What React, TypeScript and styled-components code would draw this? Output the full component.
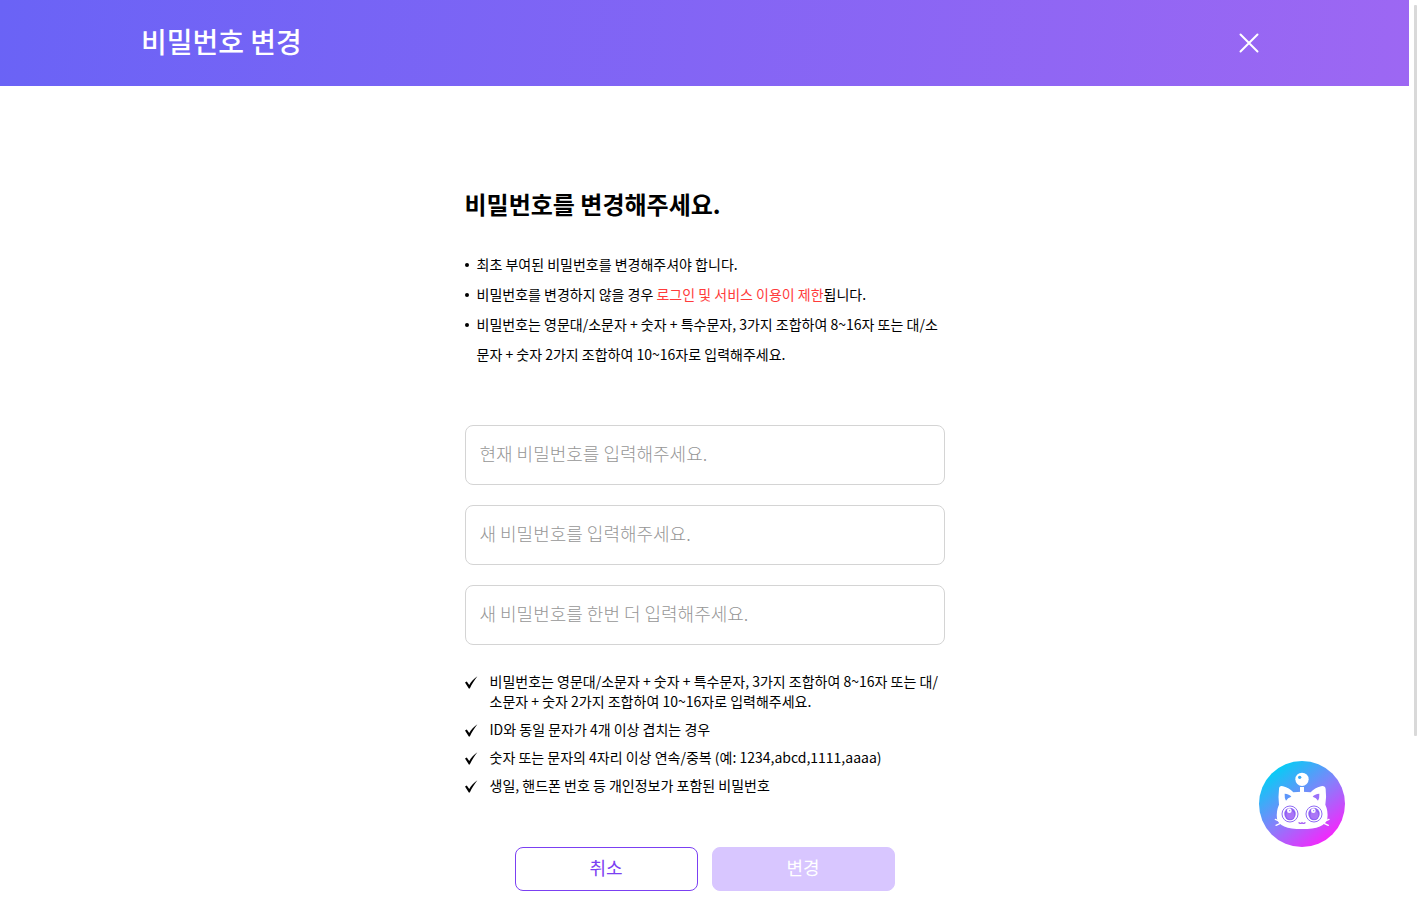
import React from "react";
import styled, { createGlobalStyle } from "styled-components";

const GlobalStyle = createGlobalStyle`
  *, *::before, *::after { box-sizing: border-box; }
  body {
    margin: 0;
    background: #fff;
    color: #000;
    font-family: "Noto Sans CJK KR", "Noto Sans", sans-serif;
  }
  button, input { font-family: inherit; }
`;

const Page = styled.div`
  padding-right: 13px;
`;

const Header = styled.header`
  height: 86px;
  background: linear-gradient(96deg, #6a63f6 0%, #9d67f3 100%);
`;

const HeaderInner = styled.div`
  width: 80%;
  height: 100%;
  margin: 0 auto;
  display: flex;
  align-items: center;
  justify-content: space-between;
`;

const Title = styled.h1`
  margin: 0;
  padding-bottom: 4px;
  font-size: 28px;
  line-height: 40px;
  font-weight: 500;
  color: #fff;
`;

const CloseButton = styled.button`
  display: grid;
  place-items: center;
  width: 38px;
  height: 38px;
  padding: 0;
  border: 0;
  background: none;
  cursor: pointer;
`;

const Main = styled.main`
  max-width: 480px;
  margin: 0 auto;
  padding: 99px 0 20px;
`;

const Heading = styled.h2`
  margin: 0 0 26px;
  font-size: 24px;
  line-height: 38px;
  font-weight: 700;
`;

const Notices = styled.ul`
  margin: 0 0 56px;
  padding: 0;
  list-style: none;
`;

const Notice = styled.li`
  display: flex;
  gap: 8px;
  font-size: 14px;
  line-height: 30px;

  &::before {
    content: "";
    flex: none;
    width: 4px;
    height: 4px;
    margin-top: 14px;
    border-radius: 50%;
    background: #000;
  }
`;

const Warning = styled.span`
  color: #ff3b3b;
`;

const Fields = styled.div`
  display: grid;
  gap: 20px;
`;

const Field = styled.input`
  width: 100%;
  height: 60px;
  padding: 0 14px 4px;
  border: 1px solid #d4d4d4;
  border-radius: 8px;
  background: #fff;
  font-size: 18px;
  font-weight: 300;
  color: #000;

  &::placeholder {
    color: #969696;
    opacity: 1;
  }
`;

const Rules = styled.ul`
  display: grid;
  gap: 8px;
  margin: 26px 0 52px;
  padding: 0;
  list-style: none;
`;

const Rule = styled.li`
  display: flex;
  gap: 12px;
  font-size: 14px;
  line-height: 20px;

  svg {
    flex: none;
    margin-top: 5px;
  }
`;

const Actions = styled.div`
  display: flex;
  justify-content: center;
  gap: 14px;
`;

const ActionButton = styled.button<{ $filled?: boolean }>`
  width: 183px;
  height: 44px;
  padding: 0 0 4px;
  border: 1px solid ${(p) => (p.$filled ? "#d8c6ff" : "#7b40f2")};
  border-radius: 8px;
  background: ${(p) => (p.$filled ? "#d8c6ff" : "#fff")};
  color: ${(p) => (p.$filled ? "#fff" : "#7b40f2")};
  font-size: 18px;
  font-weight: 400;
`;

const ScrollThumb = styled.div`
  position: fixed;
  top: 5px;
  right: 5px;
  bottom: 175px;
  width: 3px;
  border-radius: 1px;
  background: #d9d9d9;
`;

const ChatButton = styled.button`
  position: fixed;
  right: 77px;
  bottom: 64px;
  width: 86px;
  height: 86px;
  padding: 0;
  border: 0;
  border-radius: 50%;
  background: none;
  cursor: pointer;

  svg { display: block; }
`;

const CheckIcon = () => (
  <svg width="13" height="13" viewBox="0 0 13 13" aria-hidden="true">
    <path d="M0 6.4 L1.8 5.4 L4.2 9 C6.2 5.6 8.8 2.6 12.4 0.2 C9.4 4 6.8 8 4.8 12.4 H3.8 Z" fill="#000" />
  </svg>
);

const Eye = ({ x }: { x: number }) => (
  <g transform={`translate(${x} 159)`}>
    <circle r="24" fill="#fff" stroke="#8f6cf5" strokeWidth="3" />
    <ellipse cx="0" cy="0" rx="17" ry="19" fill="#8f62f3" />
    <ellipse cx="1" cy="3" rx="12" ry="13" fill="#ab76f7" />
    <circle cx="-2" cy="-10" r="7" fill="#fff" />
    <circle cx="-1" cy="-10" r="2" fill="#8f83f8" />
  </g>
);

const CatIcon = () => (
  <svg width="86" height="86" viewBox="0 0 258 258" aria-hidden="true">
    <defs>
      <linearGradient id="chat-bg" x1="0.15" y1="0.1" x2="0.8" y2="0.95">
        <stop offset="0" stopColor="#00d0f5" />
        <stop offset="0.5" stopColor="#8580fb" />
        <stop offset="1" stopColor="#fb22fb" />
      </linearGradient>
    </defs>
    <circle cx="129" cy="129" r="129" fill="url(#chat-bg)" />
    <circle cx="129" cy="55" r="20" fill="#fff" />
    <circle cx="122" cy="49" r="5" fill="#3aa9f8" />
    <path d="M123 78h12v18h-12z" fill="#fff" />
    <path
      d="M60 84 Q61 73 72 76 Q91 81 103 94 Q129 90 155 94 Q167 81 186 76 Q198 73 200 84 Q203 108 199 131 Q208 150 205 173 Q198 204 129 204 Q60 204 54 173 Q51 150 60 131 Q57 108 60 84Z"
      fill="#fff"
    />
    <path d="M77 98 Q91 99 97 107 Q86 110 81 119 Q76 110 77 98Z" fill="#5d96fa" />
    <path d="M181 98 Q167 99 161 107 Q172 110 177 119 Q182 110 181 98Z" fill="#9b71fa" />
    <Eye x={93} />
    <Eye x={165} />
    <path d="M119 184 Q123 190 129 185 Q135 190 139 184" fill="none" stroke="#a65cf3" strokeWidth="4" />
    <path d="M49 175l14 6M51 193l13-6M210 175l-14 6M208 193l-13-6" fill="none" stroke="#fff" strokeWidth="4" strokeLinecap="round" />
  </svg>
);

const fields = [
  { id: "current", label: "현재 비밀번호를 입력해주세요." },
  { id: "next", label: "새 비밀번호를 입력해주세요." },
  { id: "confirm", label: "새 비밀번호를 한번 더 입력해주세요." },
];

const rules = [
  "비밀번호는 영문대/소문자 + 숫자 + 특수문자, 3가지 조합하여 8~16자 또는 대/소문자 + 숫자 2가지 조합하여 10~16자로 입력해주세요.",
  "ID와 동일 문자가 4개 이상 겹치는 경우",
  "숫자 또는 문자의 4자리 이상 연속/중복 (예: 1234,abcd,1111,aaaa)",
  "생일, 핸드폰 번호 등 개인정보가 포함된 비밀번호",
];

export default function App() {
  return (
    <Page>
      <GlobalStyle />
      <Header>
        <HeaderInner>
          <Title>비밀번호 변경</Title>
          <CloseButton type="button" aria-label="닫기">
            <svg width="20" height="20" viewBox="0 0 20 20" aria-hidden="true">
              <path d="M1.5 1.5l17 17M18.5 1.5l-17 17" stroke="#fff" strokeWidth="2" strokeLinecap="round" />
            </svg>
          </CloseButton>
        </HeaderInner>
      </Header>
      <Main>
        <Heading>비밀번호를 변경해주세요.</Heading>
        <Notices>
          <Notice>최초 부여된 비밀번호를 변경해주셔야 합니다.</Notice>
          <Notice>
            <span>
              비밀번호를 변경하지 않을 경우 <Warning>로그인 및 서비스 이용이 제한</Warning>됩니다.
            </span>
          </Notice>
          <Notice>
            비밀번호는 영문대/소문자 + 숫자 + 특수문자, 3가지 조합하여 8~16자 또는 대/소문자 + 숫자 2가지 조합하여
            10~16자로 입력해주세요.
          </Notice>
        </Notices>
        <form onSubmit={(e) => e.preventDefault()}>
          <Fields>
            {fields.map((f) => (
              <Field key={f.id} id={f.id} type="password" placeholder={f.label} aria-label={f.label} />
            ))}
          </Fields>
          <Rules>
            {rules.map((text) => (
              <Rule key={text}>
                <CheckIcon />
                <span>{text}</span>
              </Rule>
            ))}
          </Rules>
          <Actions>
            <ActionButton type="button">취소</ActionButton>
            <ActionButton type="submit" $filled>
              변경
            </ActionButton>
          </Actions>
        </form>
      </Main>
      <ScrollThumb />
      <ChatButton type="button" aria-label="챗봇">
        <CatIcon />
      </ChatButton>
    </Page>
  );
}
